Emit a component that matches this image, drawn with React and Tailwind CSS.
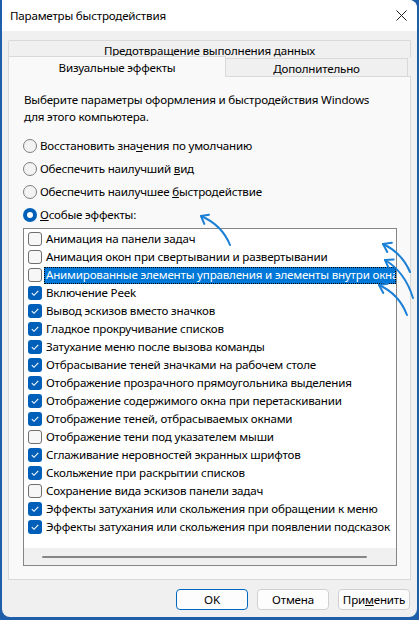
import React from "react";

const items = [
  { label: "Анимация на панели задач", checked: false },
  { label: "Анимация окон при свертывании и развертывании", checked: false },
  { label: "Анимированные элементы управления и элементы внутри окна", checked: false, selected: true },
  { label: "Включение Peek", checked: true },
  { label: "Вывод эскизов вместо значков", checked: true },
  { label: "Гладкое прокручивание списков", checked: true },
  { label: "Затухание меню после вызова команды", checked: true },
  { label: "Отбрасывание теней значками на рабочем столе", checked: true },
  { label: "Отображение прозрачного прямоугольника выделения", checked: true },
  { label: "Отображение содержимого окна при перетаскивании", checked: true },
  { label: "Отображение теней, отбрасываемых окнами", checked: true },
  { label: "Отображение тени под указателем мыши", checked: false },
  { label: "Сглаживание неровностей экранных шрифтов", checked: true },
  { label: "Скольжение при раскрытии списков", checked: true },
  { label: "Сохранение вида эскизов панели задач", checked: false },
  { label: "Эффекты затухания или скольжения при обращении к меню", checked: true },
  { label: "Эффекты затухания или скольжения при появлении подсказок", checked: true },
];

const Radio = ({ checked, children }) => (
  <div className="flex items-center h-[23px]">
    <span
      className={
        checked
          ? "w-[14px] h-[14px] rounded-full bg-[#005fb8] flex items-center justify-center"
          : "w-[14px] h-[14px] rounded-full border border-[#7e7e7e] bg-[#f3f3f3]"
      }
    >
      {checked && <span className="w-[6px] h-[6px] rounded-full bg-white" />}
    </span>
    <span className="ml-[3px]">{children}</span>
  </div>
);

const Checkbox = ({ checked }) =>
  checked ? (
    <span className="w-[14px] h-[14px] shrink-0 rounded-[3px] bg-[#005fb8] flex items-center justify-center">
      <svg width="10" height="10" viewBox="0 0 10 10">
        <path d="M1.8 5.2 L4 7.3 L8.3 2.8" fill="none" stroke="white" strokeWidth="1.1" />
      </svg>
    </span>
  ) : (
    <span className="w-[14px] h-[14px] shrink-0 rounded-[3px] border border-[#6f6f6f] bg-[#f7f7f7]" />
  );

const Arrow = ({ d, head }) => (
  <g fill="none" stroke="#1b80d6" strokeWidth="2" strokeLinecap="round" strokeLinejoin="round">
    <path d={d} />
    <path d={head} />
  </g>
);

export default function App() {
  return (
    <div
      className="relative w-[419px] h-[620px] bg-[#1f5ea8] overflow-hidden text-[11.6px] tracking-[-0.2px] text-black"
      style={{ fontFamily: '"Noto Sans", "Open Sans", sans-serif' }}
    >
      <div className="ml-[2px] w-[415px] h-[617px] bg-[#f0f0f0] rounded-tr-[8px] rounded-b-[8px] overflow-hidden flex flex-col">
        {/* title bar */}
        <div className="h-[31px] bg-white flex items-center justify-between pl-[8px] pr-[8px] shrink-0">
          <span>Параметры быстродействия</span>
          <svg width="11" height="11" viewBox="0 0 11 11" className="mr-[2px]">
            <path d="M0.5 0.5 L10.5 10.5 M10.5 0.5 L0.5 10.5" stroke="#222" strokeWidth="1" />
          </svg>
        </div>

        <div className="px-[6px] pt-[9px]">
          {/* tabs */}
          <div className="h-[17px] border border-b-0 border-[#d9d9d9] bg-[#f0f0f0] rounded-t-[2px] flex items-center justify-center leading-none pt-[3px]">
            Предотвращение выполнения данных
          </div>
          <div className="flex items-end h-[20px] -mt-[1px]">
            <div className="w-[218px] h-[21px] border border-b-0 border-[#d9d9d9] bg-[#f9f9f9] relative z-10 -mb-[1px] flex items-center justify-center leading-none pt-[1px]">
              Визуальные эффекты
            </div>
            <div className="w-[182px] h-[18px] border border-b-0 border-l-0 border-[#d9d9d9] bg-[#f0f0f0] flex items-center justify-center leading-none pt-[2px]">
              Дополнительно
            </div>
          </div>

          {/* panel */}
          <div className="h-[504px] border border-[#d9d9d9] bg-[#f9f9f9] pl-[15px] pt-[14px]">
            <p className="leading-[17px]">
              Выберите параметры оформления и быстродействия Windows
              <br />
              для этого компьютера.
            </p>
            <div className="mt-[9px] -ml-[1px]">
              <Radio>
                Восстановить зна<u>ч</u>ения по умолчанию
              </Radio>
              <Radio>
                Обеспечить наилучший <u>в</u>ид
              </Radio>
              <Radio>
                Обеспечить наилучшее <u>б</u>ыстродействие
              </Radio>
              <Radio checked>
                <u>О</u>собые эффекты:
              </Radio>
            </div>

            {/* list */}
            <div className="mt-[2px] -ml-[1px] w-[374px] h-[338px] border border-[#868686] bg-white flex flex-col overflow-hidden">
              <div className="pt-[1px] flex-1">
                {items.map((it) => (
                  <div key={it.label} className="h-[18px] flex items-center pl-[4px] whitespace-nowrap">
                    <Checkbox checked={it.checked} />
                    {it.selected ? (
                      <span className="ml-[2px] h-[17px] flex-1 bg-[#0078d7] text-white pl-[2px] flex items-center outline-1 outline-dotted outline-black -outline-offset-1 overflow-hidden">
                        {it.label}
                      </span>
                    ) : (
                      <span className="ml-[4px]">{it.label}</span>
                    )}
                  </div>
                ))}
              </div>
              <div className="h-[17px] bg-[#f0f0f0] flex items-center pl-[18px] shrink-0">
                <div className="w-[325px] h-[2px] rounded-full bg-[#868686]" />
              </div>
            </div>
          </div>
        </div>

        {/* buttons */}
        <div className="flex justify-end gap-[9px] pr-[7px] mt-[9px]">
          <button className="w-[72px] h-[21px] rounded-[4px] border border-[#0067c0] bg-[#fdfdfd] leading-none">
            OK
          </button>
          <button className="w-[72px] h-[21px] rounded-[4px] border border-[#d0d0d0] bg-[#fdfdfd] leading-none">
            Отмена
          </button>
          <button className="w-[72px] h-[21px] rounded-[4px] border border-[#d0d0d0] bg-[#fdfdfd] leading-none">
            При<u>м</u>енить
          </button>
        </div>
      </div>

      {/* annotation arrows */}
      <svg className="absolute inset-0 pointer-events-none" width="419" height="620" viewBox="0 0 419 620">
        <Arrow d="M230 245 Q222 225 201 216" head="M209 214.7 L201 216 L204.3 223.9" />
        <Arrow d="M410 272 Q402 253 383 244" head="M391.9 242.7 L383 244 L387.3 251.9" />
        <Arrow d="M413 298 Q405 272 385 260" head="M393.7 259.4 L385 260 L388.7 268.2" />
        <Arrow d="M407 315 Q399 294 379 285" head="M387.9 283.7 L379 285 L383.3 292.9" />
      </svg>
    </div>
  );
}
